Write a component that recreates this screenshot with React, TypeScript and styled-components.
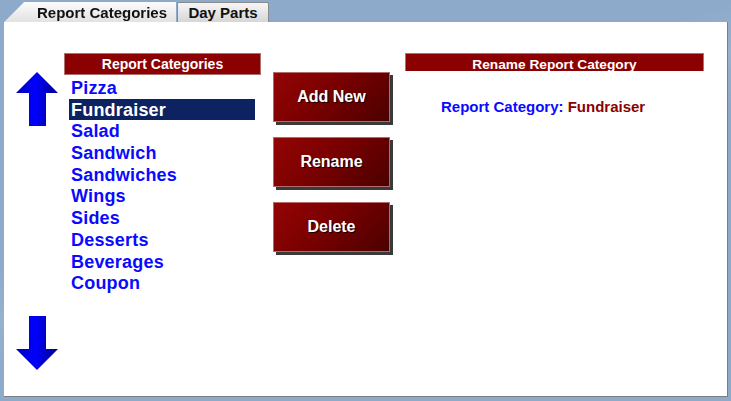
import React, { useState } from 'react';
import styled, { createGlobalStyle } from 'styled-components';

const categories = [
   'Pizza',
   'Fundraiser',
   'Salad',
   'Sandwich',
   'Sandwiches',
   'Wings',
   'Sides',
   'Desserts',
   'Beverages',
   'Coupon',
];

const GlobalStyle = createGlobalStyle`
   html, body {
      margin: 0;
      padding: 0;
      background: #8eaacb;
   }
   body {
      font-family: "Liberation Sans", Arial, sans-serif;
   }
`;

const Arrow: React.FC<{ dir: 'up' | 'down' }> = ({ dir }) => (
   <svg width="42" height="54" viewBox="0 0 42 54">
      <defs>
         <linearGradient id={`ag-${dir}`} x1="0" y1="0" x2="1" y2="0">
            <stop offset="0" stopColor="#0000b4" />
            <stop offset="0.45" stopColor="#0000ff" />
            <stop offset="1" stopColor="#00008c" />
         </linearGradient>
      </defs>
      {dir === 'up' ? (
         <polygon
            points="21,0 42,21 30,21 30,54 13,54 13,21 0,21"
            fill={`url(#ag-${dir})`}
         />
      ) : (
         <polygon
            points="13,0 30,0 30,33 42,33 21,54 0,33 13,33"
            fill={`url(#ag-${dir})`}
         />
      )}
   </svg>
);

const App: React.FC = () => {
   const [selected, setSelected] = useState('Fundraiser');
   const buttons = ['Add New', 'Rename', 'Delete'];

   return (
      <>
         <GlobalStyle />
         <Page>
            <TabBar>
               <ActiveTabWrap>
                  <ActiveTab>Report Categories</ActiveTab>
               </ActiveTabWrap>
               <Tab>Day Parts</Tab>
            </TabBar>
            <Panel>
               <ArrowColumn>
                  <Arrow dir="up" />
                  <Arrow dir="down" />
               </ArrowColumn>

               <ListColumn>
                  <Header>Report Categories</Header>
                  <List>
                     {categories.map(c => (
                        <Item
                           key={c}
                           $active={c === selected}
                           onClick={() => setSelected(c)}
                        >
                           {c}
                        </Item>
                     ))}
                  </List>
               </ListColumn>

               <ButtonColumn>
                  {buttons.map(b => (
                     <RedButton key={b}>{b}</RedButton>
                  ))}
               </ButtonColumn>

               <RenameColumn>
                  <ClippedHeader>Rename Report Category</ClippedHeader>
                  <Label>
                     Report Category: <Value>{selected}</Value>
                  </Label>
               </RenameColumn>
            </Panel>
         </Page>
      </>
   );
};

export default App;

const Page = styled.div`
   width: 731px;
   height: 401px;
   box-sizing: border-box;
   padding: 2px 3px 4px 4px;
   background:
      linear-gradient(160deg, transparent 40%, rgba(255, 255, 255, 0.08) 48%, transparent 56%),
      #8eaacb;
   display: flex;
   flex-direction: column;
`;

const TabBar = styled.div`
   display: flex;
   height: 20px;
`;

const ActiveTabWrap = styled.div`
   filter: drop-shadow(0 0 0.6px #6c6c6c);
`;

const ActiveTab = styled.div`
   width: 172px;
   height: 20px;
   box-sizing: border-box;
   padding-left: 33px;
   clip-path: polygon(20px 0, 100% 0, 100% 100%, 0 100%);
   background: linear-gradient(#fbfbfb, #e2e2e2);
   font-size: 15px;
   font-weight: bold;
   line-height: 21px;
   color: #111;
   white-space: nowrap;
`;

const Tab = styled.div`
   width: 92px;
   height: 20px;
   box-sizing: border-box;
   margin-left: 1px;
   border: 1px solid #8a8a8a;
   border-bottom: none;
   border-radius: 2px 2px 0 0;
   background: linear-gradient(#f6f6f6, #d6d6d6);
   font-size: 15px;
   font-weight: bold;
   line-height: 19px;
   text-align: center;
   color: #111;
`;

const Panel = styled.div`
   flex: 1;
   background: #fff;
   border-right: 1px solid #7d7d7d;
   border-bottom: 1px solid #7d7d7d;
   display: flex;
   align-items: flex-start;
   padding: 31px 0 0 12px;
`;

const ArrowColumn = styled.div`
   width: 42px;
   height: 298px;
   margin-top: 19px;
   display: flex;
   flex-direction: column;
   justify-content: space-between;
`;

const ListColumn = styled.div`
   width: 197px;
   margin-left: 6px;
`;

const Header = styled.div`
   height: 22px;
   background: #8b0000;
   border: 1px solid #b07070;
   box-sizing: border-box;
   color: #fff;
   font-size: 14px;
   font-weight: bold;
   line-height: 21px;
   text-align: center;
`;

const List = styled.div`
   display: flex;
   flex-direction: column;
   padding: 2px 6px 0 5px;
`;

const Item = styled.div<{ $active: boolean }>`
   height: 21.7px;
   line-height: 22.5px;
   padding-left: 2px;
   font-size: 18px;
   font-weight: bold;
   letter-spacing: 0.2px;
   cursor: pointer;
   color: ${p => (p.$active ? '#fff' : '#0a0aff')};
   background: ${p => (p.$active ? '#0d2260' : 'transparent')};
`;

const ButtonColumn = styled.div`
   margin-left: 12px;
   margin-top: 19px;
   display: flex;
   flex-direction: column;
   gap: 15px;
`;

const RedButton = styled.button`
   width: 117px;
   height: 50px;
   box-sizing: border-box;
   border: 1px solid #b46a6a;
   background: linear-gradient(135deg, #940404 0%, #7a0000 45%, #4c0000 100%);
   box-shadow: 3px 3px 0 #3a3a3a;
   color: #fff;
   font-family: "Liberation Sans", Arial, sans-serif;
   font-size: 16px;
   font-weight: bold;
   text-shadow: 1px 1px 0 #1a0000;
   cursor: pointer;
   padding: 0;
`;

const RenameColumn = styled.div`
   width: 299px;
   margin-left: 15px;
`;

const ClippedHeader = styled.div`
   height: 18px;
   overflow: hidden;
   background: #8b0000;
   border: 1px solid #b07070;
   border-bottom: none;
   box-sizing: border-box;
   color: #fff;
   font-size: 13.7px;
   font-weight: bold;
   line-height: 22px;
   text-align: center;
`;

const Label = styled.div`
   margin-top: 27px;
   padding-left: 36px;
   font-size: 15px;
   font-weight: bold;
   line-height: 18px;
   color: #0a0aff;
`;

const Value = styled.span`
   color: #8b0000;
`;
